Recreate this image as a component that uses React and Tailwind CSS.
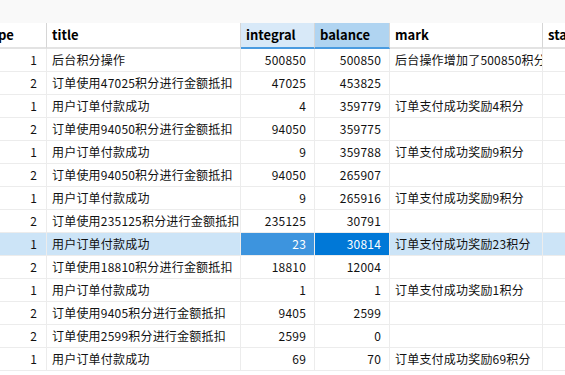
const rows = [
  ['1', '后台积分操作', '500850', '500850', '后台操作增加了500850积分'],
  ['2', '订单使用47025积分进行金额抵扣', '47025', '453825', ''],
  ['1', '用户订单付款成功', '4', '359779', '订单支付成功奖励4积分'],
  ['2', '订单使用94050积分进行金额抵扣', '94050', '359775', ''],
  ['1', '用户订单付款成功', '9', '359788', '订单支付成功奖励9积分'],
  ['2', '订单使用94050积分进行金额抵扣', '94050', '265907', ''],
  ['1', '用户订单付款成功', '9', '265916', '订单支付成功奖励9积分'],
  ['2', '订单使用235125积分进行金额抵扣', '235125', '30791', ''],
  ['1', '用户订单付款成功', '23', '30814', '订单支付成功奖励23积分', true],
  ['2', '订单使用18810积分进行金额抵扣', '18810', '12004', ''],
  ['1', '用户订单付款成功', '1', '1', '订单支付成功奖励1积分'],
  ['2', '订单使用9405积分进行金额抵扣', '9405', '2599', ''],
  ['2', '订单使用2599积分进行金额抵扣', '2599', '0', ''],
  ['1', '用户订单付款成功', '69', '70', '订单支付成功奖励69积分'],
];

const cols = 'grid grid-cols-[68px_194px_74px_75px_153px_120px]';
const cell = 'overflow-hidden whitespace-nowrap border-r border-b border-[#ececec] leading-[22px] h-[23px]';

const App = () => {
  return (
    <div
      className="w-[565px] h-[375px] overflow-hidden bg-white text-[12px] tracking-[0.2px] text-[#111111]"
      style={{ fontFamily: '"Noto Sans CJK SC", "Noto Sans", sans-serif' }}
    >
      {/* toolbar strip */}
      <div className="h-[23px] bg-[#f9f9f9]" />

      <div className="-ml-[21px]">
        {/* header */}
        <div className={`${cols} h-[26px] text-[13px] font-bold tracking-normal text-black`}>
          <div className="border-r border-r-[#d6d6d6] border-b-2 border-b-[#e3e3e3] pl-[6px] leading-[24px]">type</div>
          <div className="border-r border-r-[#d6d6d6] border-b-2 border-b-[#e3e3e3] pl-[5px] leading-[24px]">title</div>
          <div className="bg-[#d8e9f8] border-r border-r-[#d6d6d6] border-b-2 border-b-[#4a9be0] pl-[5px] leading-[24px]">integral</div>
          <div className="bg-[#b0d4f1] border-r border-r-[#d6d6d6] border-b-2 border-b-[#4a9be0] pl-[5px] leading-[24px]">balance</div>
          <div className="border-r border-r-[#d6d6d6] border-b-2 border-b-[#e3e3e3] pl-[5px] leading-[24px]">mark</div>
          <div className="border-b-2 border-b-[#e3e3e3] pl-[5px] leading-[24px]">status</div>
        </div>

        {/* rows */}
        {rows.map((r, i) => {
          const sel = r[5];
          return (
            <div key={i} className={`${cols} ${sel ? 'bg-[#cce4f7]' : ''}`}>
              <div className={`${cell} text-right pr-[9px]`}>{r[0]}</div>
              <div className={`${cell} pl-[5px]`}>{r[1]}</div>
              <div className={`${cell} text-right pr-[8px] ${sel ? 'bg-[#3d94de] text-white' : ''}`}>{r[2]}</div>
              <div className={`${cell} text-right pr-[8px] ${sel ? 'bg-[#0078d7] text-white' : ''}`}>{r[3]}</div>
              <div className={`${cell} pl-[5px]`}>{r[4]}</div>
              <div className={`${cell}`}></div>
            </div>
          );
        })}
      </div>
    </div>
  );
};

export default App;
